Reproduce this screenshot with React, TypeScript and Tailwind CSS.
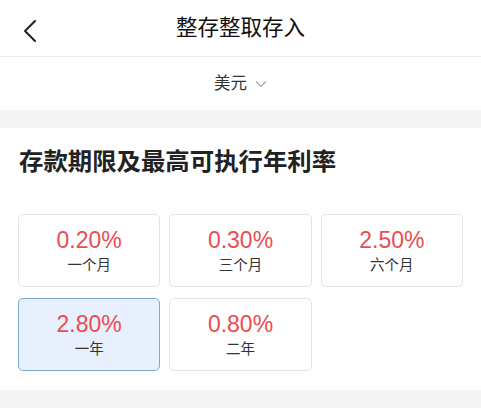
export default function App() {
  const terms = [
    { rate: "0.20%", label: "一个月" },
    { rate: "0.30%", label: "三个月" },
    { rate: "2.50%", label: "六个月" },
    { rate: "2.80%", label: "一年", active: true },
    { rate: "0.80%", label: "二年" },
  ];

  return (
    <div className="w-[481px] h-[416px] bg-white font-['Liberation_Sans','Noto_Sans_CJK_SC',sans-serif] text-[#222]">
      {/* Header */}
      <div className="relative h-[57px] flex items-center justify-center border-b border-[#ececec]">
        <svg className="absolute left-[22px] top-[19px]" width="16" height="24" viewBox="0 0 16 24" fill="none">
          <path d="M13 2 L3 12 L13 22" stroke="#222" strokeWidth="2" strokeLinecap="round" strokeLinejoin="round" />
        </svg>
        <span className="text-[21.5px] font-normal text-[#111] mt-[1px]">整存整取存入</span>
      </div>

      {/* Currency */}
      <div className="h-[53px] flex items-center justify-center gap-[8px]">
        <span className="text-[16.5px] text-[#333]">美元</span>
        <svg width="12" height="8" viewBox="0 0 12 8" fill="none" className="mt-[1px]">
          <path d="M1 1.5 L6 6.5 L11 1.5" stroke="#a0a4ab" strokeWidth="1.2" />
        </svg>
      </div>

      <div className="h-[18px] bg-[#f5f5f5]" />

      {/* Section */}
      <div className="pt-[18px] pb-[19px]">
        <h2 className="px-[19px] h-[32px] leading-[32px] text-[24.4px] font-bold text-[#222]">
          存款期限及最高可执行年利率
        </h2>
        <div className="mt-[36px] px-[18px] grid grid-cols-3 gap-x-[9px] gap-y-[11px]">
          {terms.map((t) => (
            <div
              key={t.label}
              className={
                t.active
                  ? "h-[73px] rounded-[5px] border border-[#79acd0] bg-[#e7f0fc] flex flex-col items-center justify-center"
                  : "h-[73px] rounded-[5px] border border-[#e3e3e3] bg-white flex flex-col items-center justify-center"
              }
            >
              <span className="text-[23px] leading-[26px] text-[#ea4c4f]">{t.rate}</span>
              <span className="mt-[2px] text-[14.5px] leading-[20px] text-[#333]">{t.label}</span>
            </div>
          ))}
        </div>
      </div>

      <div className="h-[18px] bg-[#f5f5f5]" />
    </div>
  );
}
